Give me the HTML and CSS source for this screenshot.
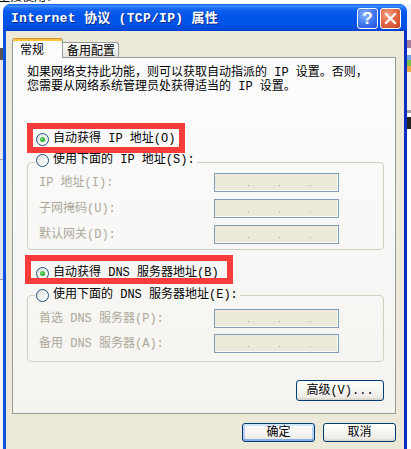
FILE: index.html
```html
<!DOCTYPE html>
<html lang="zh-CN">
<head>
<meta charset="utf-8">
<title>Internet 协议 (TCP/IP) 属性</title>
<link rel="stylesheet" href="styles.css">
</head>
<body>
<div class="screen">
  <div class="bg-top"><span class="bg-text">生接使用：</span></div>
  <div class="desk">
    <div class="bg-left">
      <i class="bl bl-a"></i><i class="bl bl-b"></i><i class="bl bl-c"></i><i class="bl bl-d"></i>
    </div>
    <div class="window">
      <div class="titlebar">
        <span class="title">Internet 协议 (TCP/IP) 属性</span>
        <div class="tbtns">
          <span class="tb help">?</span>
          <span class="tb close">
            <svg width="13" height="13" viewBox="0 0 13 13"><path d="M2 2 L11 11 M11 2 L2 11" stroke="#fff" stroke-width="2.2" stroke-linecap="square" fill="none"/></svg>
          </span>
        </div>
      </div>
      <div class="client">
        <div class="tabs">
          <div class="tab active">常规</div>
          <div class="tab">备用配置</div>
        </div>
        <div class="panel">
          <p class="intro">如果网络支持此功能，则可以获取自动指派的 IP 设置。否则，<br>您需要从网络系统管理员处获得适当的 IP 设置。</p>

          <div class="radio-row r1"><span class="radio on"></span>自动获得 IP 地址(O)</div>
          <fieldset class="group g1">
            <legend><span class="legend-in"><span class="radio"></span>使用下面的 IP 地址(S):</span></legend>
            <div class="field"><span class="lbl">IP 地址(I):</span><span class="ipbox"><i></i><i></i><i></i></span></div>
            <div class="field"><span class="lbl">子网掩码(U):</span><span class="ipbox"><i></i><i></i><i></i></span></div>
            <div class="field"><span class="lbl">默认网关(D):</span><span class="ipbox"><i></i><i></i><i></i></span></div>
          </fieldset>

          <div class="radio-row r2"><span class="radio on"></span>自动获得 DNS 服务器地址(B)</div>
          <fieldset class="group g2">
            <legend><span class="legend-in"><span class="radio"></span>使用下面的 DNS 服务器地址(E):</span></legend>
            <div class="field"><span class="lbl">首选 DNS 服务器(P):</span><span class="ipbox"><i></i><i></i><i></i></span></div>
            <div class="field"><span class="lbl">备用 DNS 服务器(A):</span><span class="ipbox"><i></i><i></i><i></i></span></div>
          </fieldset>

          <div class="adv-row"><button class="btn adv">高级(V)...</button></div>

          <div class="mark m1"></div>
          <div class="mark m2"></div>
        </div>
        <div class="actions">
          <button class="btn act default">确定</button>
          <button class="btn act">取消</button>
        </div>
      </div>
    </div>
    <div class="bg-right">
      <i class="br br-1"></i><i class="br br-2"></i><i class="br br-3"></i><i class="br br-4"></i><i class="br br-5"></i><i class="br br-6"></i><i class="br br-7"></i><i class="br br-8"></i><i class="br br-9"></i>
    </div>
  </div>
</div>
</body>
</html>
```
FILE: styles.css
```css
* { box-sizing: border-box; }

body {
  margin: 0;
  width: 411px;
  height: 449px;
  overflow: hidden;
  background: #fff;
  font-family: "Liberation Mono", "Noto Sans CJK SC", monospace;
  font-size: 12px;
  color: #000;
}

.screen {
  display: flex;
  flex-direction: column;
  height: 449px;
}

.bg-top {
  height: 4px;
  overflow: hidden;
  background: #fff;
}
.bg-text {
  display: block;
  margin: -11px 0 0 -2px;
  line-height: 14px;
  font-family: "Noto Sans CJK SC", sans-serif;
  font-size: 12px;
  color: #000;
}

.desk {
  flex: 1;
  display: flex;
  min-height: 0;
}

.bg-left {
  width: 3px;
  background: #f4f4f4;
  display: flex;
  flex-direction: column;
}
.bl { display: block; }
.bl-a { height: 44px; background: #fff; }
.bl-b { height: 12px; background: #555; }
.bl-c { height: 100px; background: #e8e8e8; border-bottom: 1px solid #9aa6b8; }
.bl-d { height: 120px; background: #dfe6ef; border-bottom: 1px solid #7f9db9; }

.bg-right {
  flex: 1;
  display: flex;
  flex-direction: column;
  background: #fff;
}
.br { display: block; }
.br-1 { height: 36px; background: #eef3f9; }
.br-2 { height: 8px; background: #a47c9c; }
.br-3 { height: 7px; background: #f7f7f7; }
.br-4 { height: 5px; background: #6ea6e6; }
.br-5 { height: 6px; background: #79c04f; }
.br-6 { height: 6px; background: #f0a840; }
.br-7 { height: 38px; background: #f4f2ea; }
.br-8 { height: 3px; background: #a0a0a0; }
.br-9 { height: 12px; background: #222; margin-top: 4px; }

/* window */
.window {
  width: 404px;
  display: flex;
  flex-direction: column;
}

.titlebar {
  height: 27px;
  border-radius: 7px 7px 0 0;
  background: linear-gradient(180deg,
    #0a5ef2 0,
    #3f8ffb 2px,
    #1f6ff3 4px,
    #0a5cee 7px,
    #0055e8 13px,
    #0053e4 21px,
    #004ad9 25px,
    #003fcb 27px);
  display: flex;
  align-items: center;
  padding: 2px 6px 0 8px;
}
.title {
  flex: 1;
  color: #fff;
  font-weight: bold;
  font-size: 13px;
  line-height: 16px;
  letter-spacing: 0.3px;
  white-space: nowrap;
  text-shadow: 1px 1px 0 #0b2a8c;
}
.tbtns {
  display: flex;
  gap: 2px;
}
.tb {
  width: 21px;
  height: 21px;
  border: 1px solid #fff;
  border-radius: 3px;
  display: flex;
  align-items: center;
  justify-content: center;
}
.help {
  background: radial-gradient(circle at 35% 30%, #8db3fa 0, #4a80f0 45%, #2a5fe4 80%, #2253d6 100%);
  color: #fff;
  font-family: "Liberation Sans", sans-serif;
  font-weight: bold;
  font-size: 17px;
  line-height: 17px;
}
.close {
  background: radial-gradient(circle at 35% 30%, #f2a287 0, #e46a47 45%, #d2502c 80%, #c24320 100%);
}

.client {
  flex: 1;
  background: #ece9d8;
  border-left: 3px solid #0c50e2;
  border-right: 3px solid #0a2fc0;
  padding: 7px 8px 0 6px;
  display: flex;
  flex-direction: column;
}

/* tabs */
.tabs {
  display: flex;
  align-items: flex-end;
  height: 20px;
  margin-bottom: -1px;
  position: relative;
  z-index: 1;
}
.tab {
  line-height: 14px;
  white-space: nowrap;
  font-family: "Noto Sans CJK SC", sans-serif;
}
.tab.active {
  width: 51px;
  height: 20px;
  border: 1px solid #919b9c;
  border-top-color: #e68b2c;
  border-bottom: none;
  border-radius: 3px 3px 0 0;
  box-shadow: inset 0 2px 0 #ffc73c;
  background: #fcfcfe;
  padding: 3px 0 0 7px;
}
.tab:not(.active) {
  width: 56px;
  height: 15px;
  margin-bottom: 1px;
  border: 1px solid #919b9c;
  border-left: none;
  border-bottom: none;
  border-radius: 0 3px 0 0;
  background: linear-gradient(180deg, #ffffff 0, #f4f3ef 50%, #e4e2da 100%);
  padding: 0 0 0 4px;
}

/* panel */
.panel {
  position: relative;
  border: 1px solid #919b9c;
  background: linear-gradient(180deg, #fcfcfe 0, #f4f3ee 100%);
  padding: 8px 11px 12px 14px;
}

.intro {
  margin: 0;
  line-height: 14px;
  white-space: nowrap;
}

.radio-row {
  display: flex;
  align-items: center;
  height: 16px;
  line-height: 16px;
  padding-left: 9px;
  white-space: nowrap;
}
.r1 { margin-top: 37px; }
.r2 { margin-top: 15px; }

.radio {
  width: 13px;
  height: 13px;
  flex: none;
  border: 1px solid #1c5180;
  border-radius: 50%;
  background: linear-gradient(135deg, #dcdcd7 0, #f4f4f2 55%, #ffffff 100%);
  margin-right: 4px;
  display: flex;
  align-items: center;
  justify-content: center;
}
.radio.on::after {
  content: "";
  width: 5px;
  height: 5px;
  border-radius: 50%;
  background: radial-gradient(circle at 35% 35%, #6ee36e 0, #2fb02f 55%, #1f941f 100%);
}

.group {
  margin: 0;
  padding: 0 0 5px 0;
  min-width: 0;
  border: 1px solid #d0d0bf;
  border-radius: 4px;
}
.g1 { margin-top: 7px; }
.g2 { margin-top: 6px; padding-bottom: 8px; }

.group legend {
  margin-left: 7px;
  padding: 0 2px 0 1px;
  line-height: 16px;
  height: 16px;
}
.legend-in {
  display: flex;
  align-items: center;
  height: 16px;
  white-space: nowrap;
}
.g1 .legend-in { margin-top: -2px; }

.field {
  display: flex;
  align-items: center;
  height: 19px;
  padding-left: 11px;
}
.g1 .field { margin-top: 7px; }
.g1 .field:first-of-type { margin-top: 3px; }
.g2 .field { margin-top: 6px; }
.g2 .field:first-of-type { margin-top: 6px; }

.lbl {
  width: 175px;
  color: #aca899;
  white-space: nowrap;
  line-height: 16px;
}
.ipbox {
  width: 125px;
  height: 19px;
  border: 1px solid #7f9db9;
  background: #ece9d8;
  box-shadow: inset -1px -1px 0 #fbfbf8;
  display: flex;
  align-items: flex-start;
  gap: 30px;
  padding: 11px 0 0 33px;
}
.ipbox i {
  display: block;
  width: 1px;
  height: 1px;
  background: #aca899;
}

.adv-row {
  display: flex;
  justify-content: flex-end;
  margin-top: 18px;
}

.btn {
  font-family: "Liberation Mono", "Noto Sans CJK SC", monospace;
  font-size: 12px;
  line-height: 14px;
  color: #000;
  border: 1px solid #003c74;
  border-radius: 3px;
  background: linear-gradient(180deg, #ffffff 0, #f7f7f4 40%, #ecebe6 85%, #d6d0c5 100%);
  padding: 0;
  margin: 0;
  white-space: nowrap;
}
.adv {
  width: 88px;
  height: 21px;
}

.actions {
  display: flex;
  justify-content: flex-end;
  gap: 8px;
  margin-top: 9px;
}
.act {
  width: 73px;
  height: 19px;
}
.default {
  box-shadow: inset 0 2px 0 #cee7ff, inset 0 -2px 0 #89ade4, inset 2px 0 0 #b9d1f6, inset -2px 0 0 #b9d1f6;
}

/* annotation marks drawn over the dialog */
.mark {
  position: absolute;
  border: 6px solid #f83b3b;
  pointer-events: none;
}
.m1 { left: 14px; top: 65px; width: 158px; height: 30px; }
.m2 { left: 12px; top: 197px; width: 208px; height: 29px; }
```
